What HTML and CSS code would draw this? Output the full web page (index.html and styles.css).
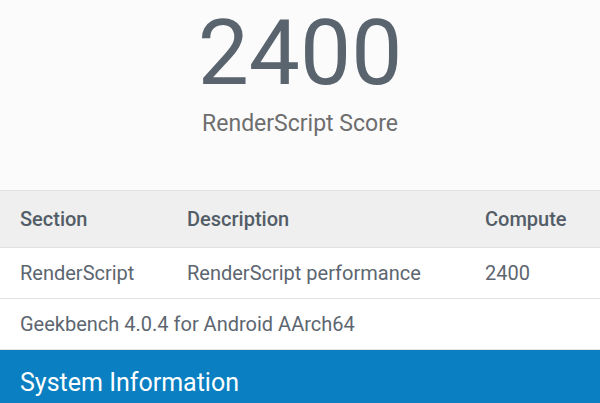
FILE: index.html
```html
<!DOCTYPE html>
<html lang="en">
<head>
  <meta charset="UTF-8">
  <meta name="viewport" content="width=device-width, initial-scale=1.0">
  <title>RenderScript Score</title>
  <link rel="stylesheet" href="styles.css">
</head>
<body>
  <div class="score-box">
    <div class="score">2400</div>
    <div class="score-label">RenderScript Score</div>
  </div>

  <table class="results">
    <colgroup>
      <col class="col-section">
      <col class="col-desc">
      <col>
    </colgroup>
    <thead>
      <tr>
        <th>Section</th>
        <th>Description</th>
        <th>Compute</th>
      </tr>
    </thead>
    <tbody>
      <tr>
        <td>RenderScript</td>
        <td>RenderScript performance</td>
        <td>2400</td>
      </tr>
      <tr>
        <td colspan="3">Geekbench 4.0.4 for Android AArch64</td>
      </tr>
    </tbody>
  </table>

  <div class="section-bar">System Information</div>
</body>
</html>
```

FILE: styles.css
```css
body {
  font-family: Roboto, "Noto Sans", sans-serif;
  background-color: #fbfbfb;
  margin: 0;
  overflow: hidden;
}
.score-box {
  text-align: center;
  padding: 8px 0 55px;
}
.score {
  font-size: 91px;
  line-height: 1;
  color: #5a646e;
}
.score-label {
  font-size: 23px;
  line-height: 1;
  margin-top: 13px;
  color: #6e6e6e;
}
.results {
  width: 100%;
  border-collapse: collapse;
  background-color: #fff;
  color: #5d6670;
  font-size: 20px;
}
.col-section {
  width: 167px;
}
.col-desc {
  width: 298px;
}
.results th,
.results td {
  text-align: left;
  padding: 0 0 0 20px;
  border-top: 1px solid #e2e2e2;
  border-bottom: 1px solid #e2e2e2;
}
.results th {
  height: 56px;
  background-color: #efefef;
  font-weight: 500;
  color: #535d67;
}
.results td {
  height: 50px;
}
.section-bar {
  background-color: #0a7fc2;
  color: #fff;
  font-size: 25px;
  padding: 18px 20px;
}
```
